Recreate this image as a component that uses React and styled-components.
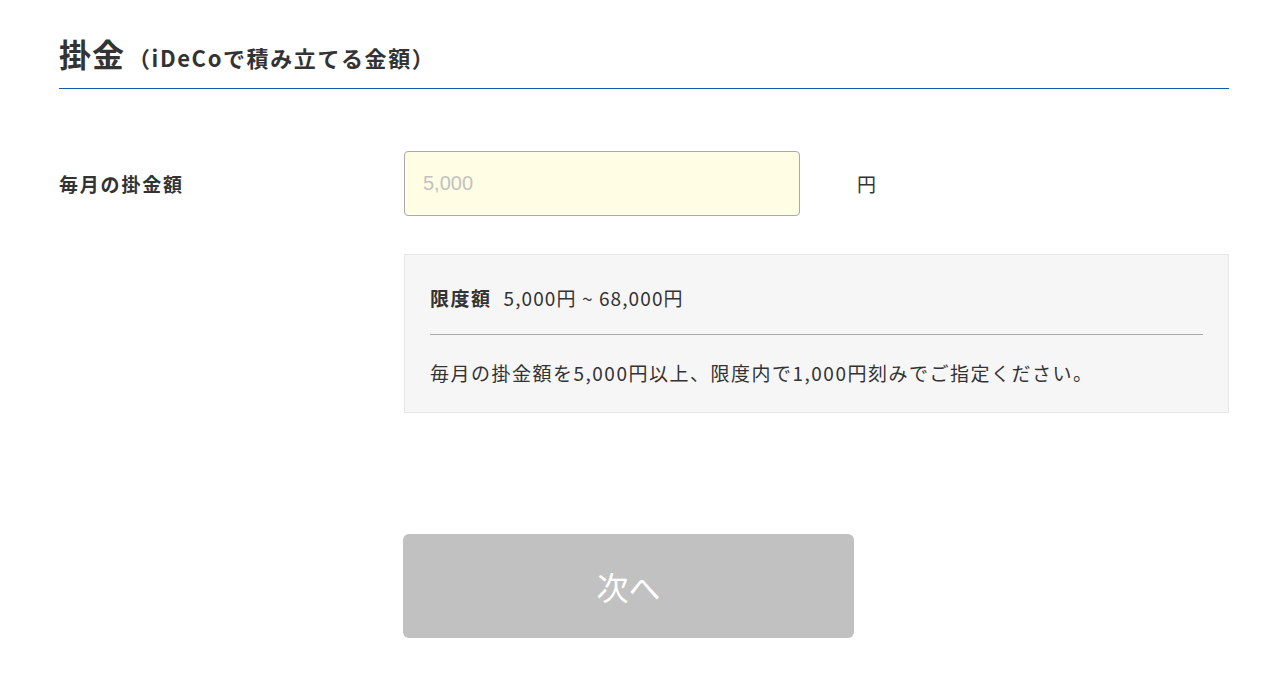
import React from "react";
import styled, { createGlobalStyle } from "styled-components";

const GlobalStyle = createGlobalStyle`
  body {
    margin: 0;
    background: #ffffff;
    font-family: "Noto Sans CJK JP", "Noto Sans", sans-serif;
    color: #333333;
  }
`;

function App() {
  return (
    <>
      <GlobalStyle />
      <Page>
        <Heading>
          <HeadingMain>掛金</HeadingMain>
          <HeadingSub>（iDeCoで積み立てる金額）</HeadingSub>
        </Heading>

        <FormRow>
          <Label>毎月の掛金額</Label>
          <Field>
            <AmountInput type="text" placeholder="5,000" />
            <Unit>円</Unit>
          </Field>
        </FormRow>

        <InfoBox>
          <LimitLine>
            <LimitTitle>限度額</LimitTitle>
            <span>5,000円 ~ 68,000円</span>
          </LimitLine>
          <Divider />
          <Note>
            毎月の掛金額を5,000円以上、限度内で1,000円刻みでご指定ください。
          </Note>
        </InfoBox>

        <NextButton disabled>次へ</NextButton>
      </Page>
    </>
  );
}

export default App;

/* The CSS */
const Page = styled.div`
  width: 1170px;
  padding: 32px 0 40px 59px;
`;

const Heading = styled.h2`
  display: flex;
  align-items: baseline;
  margin: 0;
  padding-bottom: 10px;
  border-bottom: 1px solid #0f5bb0;
  line-height: 42px;
  color: #333333;
`;

const HeadingMain = styled.span`
  font-size: 32px;
  font-weight: 700;
  letter-spacing: 1px;
`;

const HeadingSub = styled.span`
  margin-left: 3px;
  font-size: 22px;
  font-weight: 700;
  letter-spacing: 1.6px;
`;

const FormRow = styled.div`
  display: flex;
  align-items: center;
  margin-top: 62px;
`;

const Label = styled.div`
  width: 345px;
  font-size: 19px;
  font-weight: 700;
  letter-spacing: 1.8px;
`;

const Field = styled.div`
  display: flex;
  align-items: center;
`;

const AmountInput = styled.input`
  box-sizing: border-box;
  width: 396px;
  height: 65px;
  padding: 0 18px;
  background: #fffde3;
  border: 1px solid #a9a9a9;
  border-radius: 4px;
  font-family: "Liberation Sans", Arial, sans-serif;
  font-size: 20px;
  color: #333333;
  outline: none;

  &::placeholder {
    color: #c2c2c2;
  }
`;

const Unit = styled.span`
  margin-left: 57px;
  font-size: 19px;
`;

const InfoBox = styled.div`
  box-sizing: border-box;
  margin: 38px 0 0 345px;
  padding: 29px 25px 26px;
  background: #f6f6f6;
  border: 1px solid #e6e6e6;
`;

const LimitLine = styled.div`
  display: flex;
  align-items: baseline;
  gap: 12px;
  font-size: 19px;
  line-height: 27px;
  letter-spacing: 1.1px;
`;

const LimitTitle = styled.span`
  font-weight: 700;
  letter-spacing: 1.5px;
`;

const Divider = styled.hr`
  margin: 23px 0 24px;
  border: none;
  border-top: 1px solid #a9a9a9;
`;

const Note = styled.p`
  margin: 0;
  font-size: 19px;
  line-height: 27px;
  letter-spacing: 1.5px;
`;

const NextButton = styled.button`
  display: flex;
  align-items: center;
  justify-content: center;
  width: 451px;
  height: 104px;
  margin: 121px 0 0 344px;
  background: #c1c1c1;
  border: none;
  border-radius: 6px;
  color: #ffffff;
  font-family: "Noto Sans CJK JP", "Noto Sans", sans-serif;
  font-size: 32px;
  cursor: default;
`;
